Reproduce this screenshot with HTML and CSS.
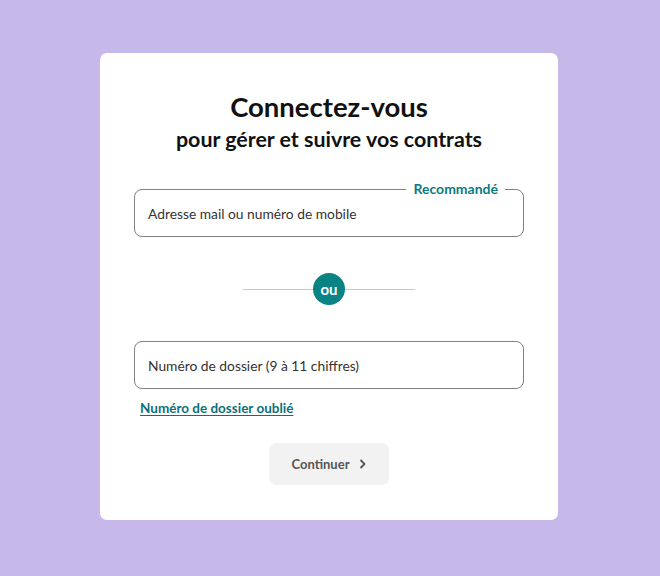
FILE: index.html
```html
<!DOCTYPE html>
<html lang="fr">
<head>
<meta charset="utf-8">
<link rel="stylesheet" href="styles.css">
</head>
<body>
<main class="card">
  <h1 class="title">Connectez-vous</h1>
  <p class="subtitle">pour gérer et suivre vos contrats</p>
  <div class="field field-first">
    <span class="legend">Recommandé</span>
    <span class="placeholder">Adresse mail ou numéro de mobile</span>
  </div>
  <div class="divider">
    <span class="line"></span>
    <span class="ou">ou</span>
    <span class="line"></span>
  </div>
  <div class="field">
    <span class="placeholder">Numéro de dossier (9 à 11 chiffres)</span>
  </div>
  <a class="link" href="#">Numéro de dossier oublié</a>
  <button class="btn" type="button">Continuer
    <svg class="chev" width="8" height="10" viewBox="0 0 8 10"><path d="M2 1.5 L5.5 5 L2 8.5" fill="none" stroke="#555" stroke-width="1.8" stroke-linecap="round" stroke-linejoin="round"/></svg>
  </button>
</main>
</body>
</html>
```
FILE: styles.css
```css
html, body { margin: 0; padding: 0; }
body {
  background: #c6b9ea;
  height: 576px;
  font-family: "Lato", "Noto Sans", sans-serif;
}
.card {
  box-sizing: border-box;
  width: 458px;
  height: 467px;
  margin: 53px 0 0 100px;
  background: #fff;
  border-radius: 7px;
  padding: 36px 34px 0;
  display: flex;
  flex-direction: column;
}
.title {
  margin: 0;
  text-align: center;
  font-weight: 700;
  font-size: 27.5px;
  line-height: 36px;
  color: #111;
}
.subtitle {
  margin: 0;
  text-align: center;
  font-weight: 700;
  font-size: 21.4px;
  line-height: 28px;
  color: #111;
}
.field {
  position: relative;
  box-sizing: border-box;
  height: 48px;
  border: 1px solid #808080;
  border-radius: 8px;
  padding: 0 13px;
  display: flex;
  align-items: center;
}
.field-first {
  margin-top: 36px;
}
.legend {
  position: absolute;
  top: -10px;
  right: 18px;
  padding: 0 7px;
  background: #fff;
  font-size: 14px;
  font-weight: 700;
  color: #0c7b80;
  line-height: 18px;
}
.placeholder {
  font-size: 13.8px;
  color: #333;
}
.divider {
  display: flex;
  align-items: center;
  justify-content: center;
  margin: 36px 0;
}
.line {
  width: 70px;
  height: 1px;
  background: #c8c8c8;
}
.ou {
  width: 32px;
  height: 32px;
  border-radius: 50%;
  background: #0a8385;
  color: #fff;
  font-weight: 700;
  font-size: 15px;
  display: flex;
  align-items: center;
  justify-content: center;
  line-height: 1;
}
.link {
  align-self: flex-start;
  margin: 9px 0 0 6px;
  font-size: 13.5px;
  line-height: 20px;
  font-weight: 700;
  color: #0c7177;
  text-decoration: underline;
  text-underline-offset: 2px;
}
.btn {
  align-self: center;
  margin-top: 25px;
  width: 120px;
  height: 42px;
  border: none;
  border-radius: 7px;
  background: #f2f2f2;
  color: #555;
  font-family: "Lato", sans-serif;
  font-size: 13px;
  font-weight: 700;
  display: flex;
  align-items: center;
  justify-content: center;
  gap: 9px;
  padding: 0;
}
```
